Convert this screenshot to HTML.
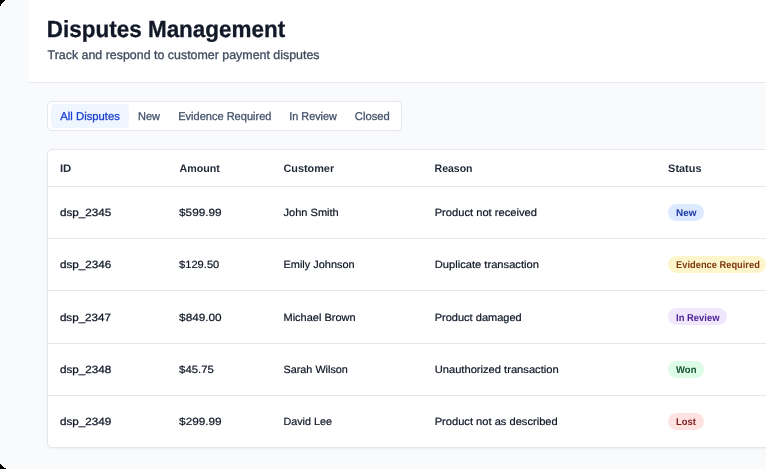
<!DOCTYPE html>
<html>
<head>
<meta charset="utf-8">
<style>
html,body{margin:0;padding:0;}
body{width:766px;height:469px;overflow:hidden;position:relative;background:#f9fafb;font-family:"Liberation Sans",sans-serif;}
.box{position:absolute;box-sizing:border-box;}
svg{position:absolute;left:0;top:0;will-change:transform;}
svg text{font-family:"Liberation Sans",sans-serif;white-space:pre;text-rendering:geometricPrecision;}
</style>
</head>
<body>
<div class="box" style="left:29px;top:0;width:737px;height:83px;background:#fff;border-bottom:1px solid #e5e7eb"></div>
<div class="box" style="left:47px;top:101px;width:355px;height:30px;background:#fff;border:1px solid #e5e7eb;border-radius:4px"></div>
<div class="box" style="left:51px;top:104px;width:78px;height:24px;background:#eff6ff;border-radius:4px"></div>
<div class="box" style="left:47px;top:149px;width:800px;height:299px;background:#fff;border:1px solid #e5e7eb;border-radius:5px;box-shadow:0 1px 2px rgba(0,0,0,0.05)"></div>
<div class="box" style="left:48px;top:186px;width:720px;height:1px;background:#e5e7eb"></div>
<div class="box" style="left:48px;top:238px;width:720px;height:1px;background:#e5e7eb"></div>
<div class="box" style="left:48px;top:290px;width:720px;height:1px;background:#e5e7eb"></div>
<div class="box" style="left:48px;top:343px;width:720px;height:1px;background:#e5e7eb"></div>
<div class="box" style="left:48px;top:395px;width:720px;height:1px;background:#e5e7eb"></div>
<div class="box" style="left:668.40px;top:203.90px;width:36.00px;height:16.9px;border-radius:8.5px;background:#dbeafe"></div>
<div class="box" style="left:668.00px;top:256.15px;width:98.00px;height:16.9px;border-radius:8.5px;background:#fdf5cc"></div>
<div class="box" style="left:668.00px;top:308.40px;width:59.00px;height:16.9px;border-radius:8.5px;background:#f0e7fd"></div>
<div class="box" style="left:668.00px;top:360.65px;width:36.00px;height:16.9px;border-radius:8.5px;background:#dcfce7"></div>
<div class="box" style="left:668.00px;top:412.90px;width:36.00px;height:16.9px;border-radius:8.5px;background:#fee2e2"></div>
<svg width="766" height="469" viewBox="0 0 766 469">
<rect x="5" y="0" width="1" height="1" fill="#fff" shape-rendering="crispEdges"/><rect x="0" y="0" width="5" height="1" fill="#000" shape-rendering="crispEdges"/>
<rect x="4" y="1" width="1" height="1" fill="#fff" shape-rendering="crispEdges"/><rect x="0" y="1" width="4" height="1" fill="#000" shape-rendering="crispEdges"/>
<rect x="3" y="2" width="1" height="1" fill="#fff" shape-rendering="crispEdges"/><rect x="0" y="2" width="3" height="1" fill="#000" shape-rendering="crispEdges"/>
<rect x="2" y="3" width="1" height="1" fill="#fff" shape-rendering="crispEdges"/><rect x="0" y="3" width="2" height="1" fill="#000" shape-rendering="crispEdges"/>
<rect x="1" y="4" width="1" height="1" fill="#fff" shape-rendering="crispEdges"/><rect x="0" y="4" width="1" height="1" fill="#000" shape-rendering="crispEdges"/>
<rect x="1" y="5" width="1" height="1" fill="#fff" shape-rendering="crispEdges"/><rect x="0" y="5" width="1" height="1" fill="#000" shape-rendering="crispEdges"/>
<rect x="0" y="6" width="1" height="1" fill="#fff" shape-rendering="crispEdges"/>
<rect x="0" y="463" width="1" height="1" fill="#fff" shape-rendering="crispEdges"/>
<rect x="1" y="464" width="1" height="1" fill="#fff" shape-rendering="crispEdges"/><rect x="0" y="464" width="1" height="1" fill="#000" shape-rendering="crispEdges"/>
<rect x="2" y="465" width="1" height="1" fill="#fff" shape-rendering="crispEdges"/><rect x="0" y="465" width="2" height="1" fill="#000" shape-rendering="crispEdges"/>
<rect x="3" y="466" width="1" height="1" fill="#fff" shape-rendering="crispEdges"/><rect x="0" y="466" width="3" height="1" fill="#000" shape-rendering="crispEdges"/>
<rect x="4" y="467" width="1" height="1" fill="#fff" shape-rendering="crispEdges"/><rect x="0" y="467" width="4" height="1" fill="#000" shape-rendering="crispEdges"/>
<rect x="6" y="468" width="1" height="1" fill="#fff" shape-rendering="crispEdges"/><rect x="0" y="468" width="6" height="1" fill="#000" shape-rendering="crispEdges"/>
<text x="46.85" y="37.20" font-size="23.40" font-weight="bold" fill="#111827" stroke="#111827" stroke-width="0.30" textLength="238.36" lengthAdjust="spacingAndGlyphs">Disputes Management</text>
<text x="47.55" y="59.00" font-size="12.35" fill="#3f4b5e" stroke="#3f4b5e" stroke-width="0.30" textLength="272.04" lengthAdjust="spacingAndGlyphs">Track and respond to customer payment disputes</text>
<text x="60.35" y="119.60" font-size="11.30" fill="#1c40d0" stroke="#1c40d0" stroke-width="0.30" textLength="59.55" lengthAdjust="spacingAndGlyphs">All Disputes</text>
<text x="138.05" y="119.60" font-size="11.30" fill="#44536b" stroke="#44536b" stroke-width="0.30" textLength="22.02" lengthAdjust="spacingAndGlyphs">New</text>
<text x="178.25" y="119.60" font-size="11.30" fill="#44536b" stroke="#44536b" stroke-width="0.30" textLength="93.15" lengthAdjust="spacingAndGlyphs">Evidence Required</text>
<text x="289.35" y="119.60" font-size="11.30" fill="#44536b" stroke="#44536b" stroke-width="0.30" textLength="47.42" lengthAdjust="spacingAndGlyphs">In Review</text>
<text x="354.85" y="119.60" font-size="11.30" fill="#44536b" stroke="#44536b" stroke-width="0.30" textLength="34.85" lengthAdjust="spacingAndGlyphs">Closed</text>
<text x="59.90" y="172.00" font-size="10.90" font-weight="bold" fill="#1f2937" textLength="11.35" lengthAdjust="spacingAndGlyphs">ID</text>
<text x="179.50" y="172.00" font-size="10.90" font-weight="bold" fill="#1f2937" textLength="40.35" lengthAdjust="spacingAndGlyphs">Amount</text>
<text x="283.40" y="172.00" font-size="10.90" font-weight="bold" fill="#1f2937" textLength="50.74" lengthAdjust="spacingAndGlyphs">Customer</text>
<text x="434.60" y="172.00" font-size="10.90" font-weight="bold" fill="#1f2937" textLength="37.95" lengthAdjust="spacingAndGlyphs">Reason</text>
<text x="668.10" y="172.00" font-size="10.90" font-weight="bold" fill="#1f2937" textLength="33.45" lengthAdjust="spacingAndGlyphs">Status</text>
<text x="59.92" y="216.00" font-size="10.47" fill="#0d1524" stroke="#0d1524" stroke-width="0.25" textLength="51.40" lengthAdjust="spacingAndGlyphs">dsp_2345</text>
<text x="179.10" y="216.00" font-size="10.47" fill="#0d1524" stroke="#0d1524" stroke-width="0.20" textLength="42.45" lengthAdjust="spacingAndGlyphs">$599.99</text>
<text x="283.50" y="216.00" font-size="10.47" fill="#0d1524" stroke="#0d1524" stroke-width="0.20" textLength="55.26" lengthAdjust="spacingAndGlyphs">John Smith</text>
<text x="434.70" y="216.00" font-size="10.47" fill="#0d1524" stroke="#0d1524" stroke-width="0.20" textLength="102.25" lengthAdjust="spacingAndGlyphs">Product not received</text>
<text x="59.92" y="268.25" font-size="10.47" fill="#0d1524" stroke="#0d1524" stroke-width="0.25" textLength="51.30" lengthAdjust="spacingAndGlyphs">dsp_2346</text>
<text x="179.10" y="268.25" font-size="10.47" fill="#0d1524" stroke="#0d1524" stroke-width="0.20" textLength="40.15" lengthAdjust="spacingAndGlyphs">$129.50</text>
<text x="283.50" y="268.25" font-size="10.47" fill="#0d1524" stroke="#0d1524" stroke-width="0.20" textLength="71.15" lengthAdjust="spacingAndGlyphs">Emily Johnson</text>
<text x="434.70" y="268.25" font-size="10.47" fill="#0d1524" stroke="#0d1524" stroke-width="0.20" textLength="104.25" lengthAdjust="spacingAndGlyphs">Duplicate transaction</text>
<text x="59.92" y="320.50" font-size="10.47" fill="#0d1524" stroke="#0d1524" stroke-width="0.25" textLength="51.10" lengthAdjust="spacingAndGlyphs">dsp_2347</text>
<text x="179.10" y="320.50" font-size="10.47" fill="#0d1524" stroke="#0d1524" stroke-width="0.20" textLength="42.55" lengthAdjust="spacingAndGlyphs">$849.00</text>
<text x="283.50" y="320.50" font-size="10.47" fill="#0d1524" stroke="#0d1524" stroke-width="0.20" textLength="72.05" lengthAdjust="spacingAndGlyphs">Michael Brown</text>
<text x="434.70" y="320.50" font-size="10.47" fill="#0d1524" stroke="#0d1524" stroke-width="0.20" textLength="87.05" lengthAdjust="spacingAndGlyphs">Product damaged</text>
<text x="59.92" y="372.75" font-size="10.47" fill="#0d1524" stroke="#0d1524" stroke-width="0.25" textLength="51.30" lengthAdjust="spacingAndGlyphs">dsp_2348</text>
<text x="179.10" y="372.75" font-size="10.47" fill="#0d1524" stroke="#0d1524" stroke-width="0.20" textLength="34.75" lengthAdjust="spacingAndGlyphs">$45.75</text>
<text x="283.50" y="372.75" font-size="10.47" fill="#0d1524" stroke="#0d1524" stroke-width="0.20" textLength="64.35" lengthAdjust="spacingAndGlyphs">Sarah Wilson</text>
<text x="434.70" y="372.75" font-size="10.47" fill="#0d1524" stroke="#0d1524" stroke-width="0.20" textLength="123.95" lengthAdjust="spacingAndGlyphs">Unauthorized transaction</text>
<text x="59.92" y="425.00" font-size="10.47" fill="#0d1524" stroke="#0d1524" stroke-width="0.25" textLength="51.30" lengthAdjust="spacingAndGlyphs">dsp_2349</text>
<text x="179.10" y="425.00" font-size="10.47" fill="#0d1524" stroke="#0d1524" stroke-width="0.20" textLength="42.55" lengthAdjust="spacingAndGlyphs">$299.99</text>
<text x="283.50" y="425.00" font-size="10.47" fill="#0d1524" stroke="#0d1524" stroke-width="0.20" textLength="48.35" lengthAdjust="spacingAndGlyphs">David Lee</text>
<text x="434.70" y="425.00" font-size="10.47" fill="#0d1524" stroke="#0d1524" stroke-width="0.20" textLength="123.05" lengthAdjust="spacingAndGlyphs">Product not as described</text>
<text x="676.10" y="216.00" font-size="10.00" font-weight="bold" fill="#1e3aa6" textLength="20.43" lengthAdjust="spacingAndGlyphs">New</text>
<text x="676.10" y="268.25" font-size="10.00" font-weight="bold" fill="#7f3a0e" textLength="83.75" lengthAdjust="spacingAndGlyphs">Evidence Required</text>
<text x="676.10" y="320.50" font-size="10.00" font-weight="bold" fill="#4c1d95" textLength="43.43" lengthAdjust="spacingAndGlyphs">In Review</text>
<text x="676.10" y="372.75" font-size="10.00" font-weight="bold" fill="#14532d" textLength="20.35" lengthAdjust="spacingAndGlyphs">Won</text>
<text x="676.10" y="425.00" font-size="10.00" font-weight="bold" fill="#7f1d1d" textLength="19.75" lengthAdjust="spacingAndGlyphs">Lost</text>
</svg>
</body>
</html>
